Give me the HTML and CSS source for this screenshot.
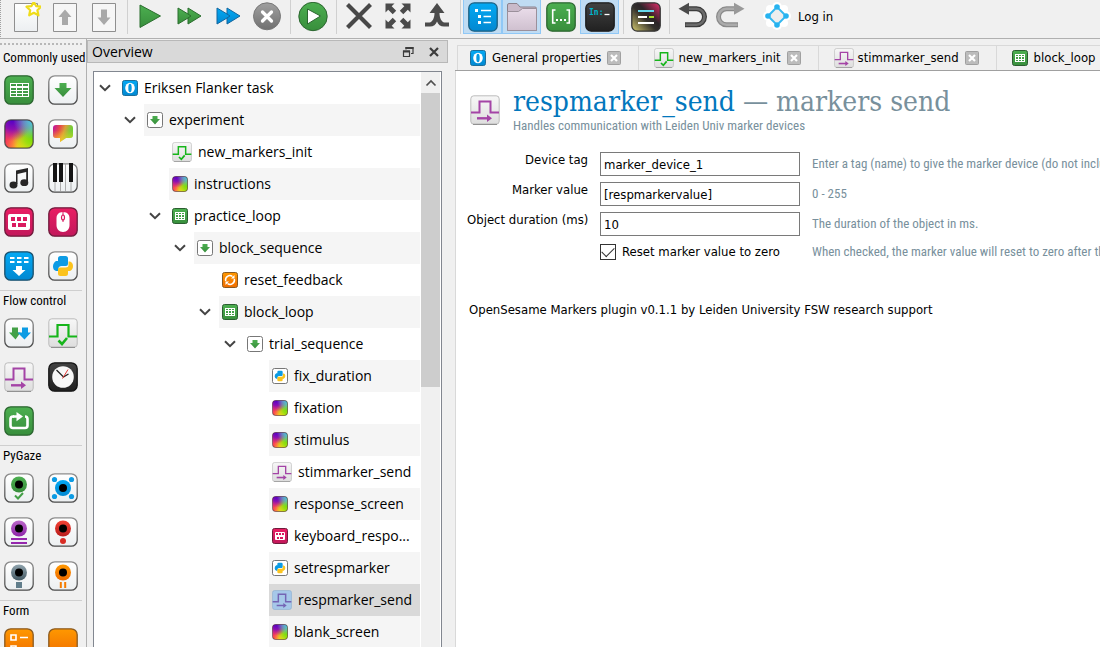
FILE: index.html
```html
<!DOCTYPE html>
<html lang="en">
<head>
<meta charset="utf-8">
<title>OpenSesame</title>
<link rel="stylesheet" href="styles.css">
</head>
<body>
<svg class="defs" aria-hidden="true">
  <defs>
    <linearGradient id="g-green" x1="0" y1="0" x2="0" y2="1"><stop offset="0" stop-color="#4caf50"/><stop offset="1" stop-color="#388e3c"/></linearGradient>
    <linearGradient id="g-blue" x1="0" y1="0" x2="0" y2="1"><stop offset="0" stop-color="#03a9f4"/><stop offset="1" stop-color="#0288d1"/></linearGradient>
    <linearGradient id="g-pink" x1="0" y1="0" x2="0" y2="1"><stop offset="0" stop-color="#e91e63"/><stop offset="1" stop-color="#c2185b"/></linearGradient>
    <linearGradient id="g-orange" x1="0" y1="0" x2="0" y2="1"><stop offset="0" stop-color="#ff9800"/><stop offset="1" stop-color="#ef6c00"/></linearGradient>
    <linearGradient id="g-white" x1="0" y1="0" x2="0" y2="1"><stop offset="0" stop-color="#fff"/><stop offset="1" stop-color="#eceff1"/></linearGradient>
    <linearGradient id="g-silver" x1="0" y1="0" x2="0" y2="1"><stop offset="0" stop-color="#f7f7f7"/><stop offset="1" stop-color="#dedede"/></linearGradient>
    <linearGradient id="g-dark" x1="0" y1="0" x2="0" y2="1"><stop offset="0" stop-color="#424242"/><stop offset="1" stop-color="#212121"/></linearGradient>
    <linearGradient id="g-gray" x1="0" y1="0" x2="0" y2="1"><stop offset="0" stop-color="#a0a0a0"/><stop offset="1" stop-color="#707070"/></linearGradient>
    <linearGradient id="g-purple" x1="0" y1="0" x2="0" y2="1"><stop offset="0" stop-color="#ba68c8"/><stop offset="1" stop-color="#8e24aa"/></linearGradient>
    <linearGradient id="g-red" x1="0" y1="0" x2="0" y2="1"><stop offset="0" stop-color="#f44336"/><stop offset="1" stop-color="#b71c1c"/></linearGradient>
    <linearGradient id="g-slate" x1="0" y1="0" x2="0" y2="1"><stop offset="0" stop-color="#90a4ae"/><stop offset="1" stop-color="#455a64"/></linearGradient>
    <linearGradient id="g-folder" x1="0" y1="0" x2="0" y2="1"><stop offset="0" stop-color="#e9dce9"/><stop offset="1" stop-color="#cfc0cf"/></linearGradient>
    <linearGradient id="g-edge" x1="0" y1="0" x2="0" y2="1"><stop offset="0" stop-color="#8c8c8c"/><stop offset="1" stop-color="#4a4a4a"/></linearGradient>
    <linearGradient id="g-mono" x1="0" y1="1" x2="1" y2="0"><stop offset="0" stop-color="#d8cd70"/><stop offset=".45" stop-color="#33302c"/><stop offset=".6" stop-color="#2c2528"/><stop offset="1" stop-color="#ec2a6c"/></linearGradient>
    <linearGradient id="g-bubble" x1="0" y1=".2" x2="1" y2=".5"><stop offset="0" stop-color="#c01898"/><stop offset=".3" stop-color="#e84848"/><stop offset=".55" stop-color="#d8a038"/><stop offset=".8" stop-color="#80c838"/><stop offset="1" stop-color="#68d030"/></linearGradient>
    <linearGradient id="g-warm" x1="0" y1="0" x2="0" y2="1"><stop offset=".3" stop-color="#ffd820" stop-opacity="0"/><stop offset="1" stop-color="#ffd820" stop-opacity=".7"/></linearGradient>
    <radialGradient id="r-purple" cx=".25" cy="0" r=".75"><stop offset="0" stop-color="#5000c8"/><stop offset=".45" stop-color="#7808c0" stop-opacity=".85"/><stop offset="1" stop-color="#b010b0" stop-opacity="0"/></radialGradient>
    <radialGradient id="r-cyan" cx="1" cy="0" r=".7"><stop offset="0" stop-color="#38d0f0"/><stop offset=".5" stop-color="#48b8e0" stop-opacity=".65"/><stop offset="1" stop-color="#50c0c0" stop-opacity="0"/></radialGradient>
    <radialGradient id="r-green" cx="1" cy=".6" r=".75"><stop offset="0" stop-color="#70e000"/><stop offset=".4" stop-color="#90e010" stop-opacity=".9"/><stop offset="1" stop-color="#b0e010" stop-opacity="0"/></radialGradient>
    <radialGradient id="r-yellow" cx=".7" cy="1" r=".7"><stop offset="0" stop-color="#ffe818"/><stop offset=".4" stop-color="#ffe018" stop-opacity=".8"/><stop offset="1" stop-color="#ffb020" stop-opacity="0"/></radialGradient>

    <symbol id="i-frame-white" viewBox="0 0 30 30"><rect x=".8" y=".8" width="28.4" height="28.4" rx="6" fill="url(#g-white)" stroke="url(#g-edge)" stroke-width="1.3"/></symbol>
    <symbol id="i-frame-silver" viewBox="0 0 30 30"><rect x=".8" y=".8" width="28.4" height="28.4" rx="3" fill="url(#g-silver)" stroke="#bcbcbc"/><path d="M3 29.4h24" stroke="#8a8a8a"/></symbol>
    <symbol id="i-table" viewBox="0 0 30 30"><rect x=".8" y=".8" width="28.4" height="28.4" rx="6" fill="url(#g-green)" stroke="#2c6630" stroke-width="1.3"/><path d="M6 8h19v14H6z" fill="#fff"/><path d="M7 9h5v2H7zM13 9h5v2h-5zM19 9h5v2h-5zM7 13h5v2H7zM13 13h5v2h-5zM19 13h5v2h-5zM7 16h5v2H7zM13 16h5v2h-5zM19 16h5v2h-5zM7 19h5v2H7zM13 19h5v2h-5zM19 19h5v2h-5z" fill="#409a45"/></symbol>
    <symbol id="i-loop" viewBox="0 0 16 16"><rect x=".5" y=".5" width="15" height="15" rx="2" fill="url(#g-green)" stroke="#2b5e30"/><path d="M3 4h10v8H3z" fill="#fff"/><path d="M4 5h2v1H4zM7 5h2v1H7zM10 5h2v1h-2zM4 7h2v2H4zM7 7h2v2H7zM10 7h2v2h-2zM4 10h2v1H4zM7 10h2v1H7zM10 10h2v1h-2z" fill="#43a047"/></symbol>
    <symbol id="i-seq" viewBox="0 0 30 30"><use href="#i-frame-white"/><path d="M11.5 8h7v5h5L15 22 6.500 13h5z" fill="url(#g-green)"/></symbol>
    <symbol id="i-seq-s" viewBox="0 0 16 16"><rect x=".5" y=".5" width="15" height="15" rx="2" fill="#fff" stroke="#777"/><path d="M5.500 4h5v3H13l-5 5.500L3 7h2.500z" fill="url(#g-green)"/></symbol>
    <symbol id="i-color" viewBox="0 0 30 30"><g><rect x="1" y="1" width="28" height="28" rx="6" fill="#f83c58"/><rect x="1" y="1" width="28" height="28" rx="6" fill="url(#r-yellow)"/><rect x="1" y="1" width="28" height="28" rx="6" fill="url(#r-green)"/><rect x="1" y="1" width="28" height="28" rx="6" fill="url(#r-purple)"/><rect x="1" y="1" width="28" height="28" rx="6" fill="url(#r-cyan)"/></g><rect x=".8" y=".8" width="28.4" height="28.4" rx="6" fill="none" stroke="#333" stroke-opacity=".8" stroke-width="1.3"/></symbol>
    <symbol id="i-bubble" viewBox="0 0 30 30"><use href="#i-frame-white"/><path d="M8 6h14q3 0 3 3v7q0 3-3 3h-4l-6 4v-4H8q-3 0-3-3V9q0-3 3-3z" fill="url(#g-bubble)"/><path d="M8 6h14q3 0 3 3v7q0 3-3 3h-4l-6 4v-4H8q-3 0-3-3V9q0-3 3-3z" fill="url(#g-warm)"/></symbol>
    <symbol id="i-music" viewBox="0 0 30 30"><use href="#i-frame-white"/><path d="M12 7.500L24 5v14h-1.800V9L13.500 11v10H12z" fill="#262626"/><ellipse cx="9.500" cy="22" rx="4" ry="3.400" fill="#262626"/><ellipse cx="20.300" cy="19.700" rx="4" ry="3.400" fill="#262626"/></symbol>
    <symbol id="i-piano" viewBox="0 0 30 30"><use href="#i-frame-white"/><path d="M7 1v27.500M12.500 1v27.500M17.500 1v27.500M23 1v27.500" stroke="#9a9a9a" stroke-width=".8"/><path d="M5 0h4v19H5zM11 0h4v19h-4zM21 0h4v19h-4z" fill="#151515"/></symbol>
    <symbol id="i-keys" viewBox="0 0 30 30"><rect x=".8" y=".8" width="28.4" height="28.4" rx="6" fill="url(#g-pink)" stroke="#6f1c3c" stroke-width="1.300"/><rect x="4" y="7" width="22" height="16" rx="2" fill="#fff"/><path d="M7 10h4v4H7zM13 10h4v4h-4zM19 10h4v4h-4zM8 16h4v4H8zM14 16h8v4h-8z" fill="#da1b60"/></symbol>
    <symbol id="i-keys-s" viewBox="0 0 16 16"><rect x=".5" y=".5" width="15" height="15" rx="2" fill="url(#g-pink)" stroke="#6f1c3c"/><rect x="3" y="4" width="10" height="8" rx="1" fill="#fff"/><path d="M4 5h2v2H4zM7 5h2v2H7zM10 5h2v2h-2zM5 9h2v2H5zM8 9h3v2H8z" fill="#da1b60"/></symbol>
    <symbol id="i-mouse" viewBox="0 0 30 30"><rect x=".8" y=".8" width="28.4" height="28.4" rx="6" fill="url(#g-pink)" stroke="#6f1c3c" stroke-width="1.300"/><path d="M15 5c4.500 0 6.500 3 6.500 6v7c0 4-2.500 7-6.500 7s-6.500-3-6.500-7v-7c0-3 2-6 6.500-6z" fill="#fff"/><path d="M15 5v3.500M15 12v3" stroke="#d81b60"/><ellipse cx="15" cy="10.500" rx="1.500" ry="2.500" fill="none" stroke="#d81b60" stroke-width="1.200"/></symbol>
    <symbol id="i-batch" viewBox="0 0 30 30"><rect x=".8" y=".8" width="28.400" height="28.400" rx="6" fill="url(#g-blue)" stroke="#1b506c" stroke-width="1.300"/><path d="M6 7h4.500M13 7h4.500M20 7h4.500M6 11h4.500M13 11h4.500M20 11h4.500" stroke="#fff" stroke-width="1.800"/><path d="M12 15h6v4h3.500L15 25l-6.500-6H12z" fill="#fff"/></symbol>
    <symbol id="i-py-mark" viewBox="0 0 30 30"><path d="M12.500 5h5q2.500 0 2.500 2.500V13q0 2-2 2h-4.500q-3 0-3 2.500V20H8q-3-1-3-4.500T8 10h2V7.500Q10 5 12.500 5z" fill="#0c9be4"/><path d="M12.500 25h5q2.500 0 2.500-2.500V20h2q3-1.500 3-5t-3-4.500h-1.500V14q0 2.500-3 2.500H12q-2 0-2 2v4Q10 25 12.500 25z" fill="#fbc31d"/></symbol>
    <symbol id="i-python" viewBox="0 0 30 30"><use href="#i-frame-white"/><use href="#i-py-mark"/></symbol>
    <symbol id="i-python-s" viewBox="0 0 16 16"><rect x=".5" y=".5" width="15" height="15" rx="2" fill="#fff" stroke="#777"/><use href="#i-py-mark" width="16" height="16"/></symbol>
    <symbol id="i-parallel" viewBox="0 0 30 30"><use href="#i-frame-white"/><path d="M8 9.500h6v5h2.500l-5 7-6.500-7h3z" fill="#43a047"/><path d="M18 9.500h6v5h3l-6.500 7-7-7H18z" fill="#0c9be4"/></symbol>
    <symbol id="i-pulse-ok" viewBox="0 0 30 30"><use href="#i-frame-silver"/><path d="M1 18.500h8.500V7h11v11.500H29" fill="none" stroke="#16b51a" stroke-width="2.200"/><path d="M10.500 22.500l3.500 3.500 5-6" fill="none" stroke="#16b51a" stroke-width="2.600"/></symbol>
    <symbol id="i-pulse" viewBox="0 0 30 30"><use href="#i-frame-silver"/><path d="M1 17.500h8.500V6.500h11v11H29" fill="none" stroke="#a444a6" stroke-width="2"/><path d="M7 23.300h12" stroke="#a444a6" stroke-width="2.400"/><path d="M17 19.500l5 3.800-5 3.800z" fill="#a444a6"/></symbol>
    <symbol id="i-pulse-sel" viewBox="0 0 30 30"><rect x=".8" y=".8" width="28.400" height="28.400" rx="3" fill="#a6c8e9" stroke="#8fb0d0"/><path d="M1 17.500h8.500V6.500h11v11H29M7 23.300h12" fill="none" stroke="#7464b4" stroke-width="2.200"/><path d="M17 19.500l5 3.800-5 3.800z" fill="#7464b4"/></symbol>
    <symbol id="i-clock" viewBox="0 0 30 30"><rect x=".8" y=".8" width="28.400" height="28.400" rx="6" fill="url(#g-dark)" stroke="#151515" stroke-width="1.300"/><circle cx="15" cy="15" r="10.800" fill="#f8f8f8"/><path d="M8.500 8l7 7 5-3" fill="none" stroke="#222" stroke-width="1.300"/><path d="M14.500 16.500L20 7.500" stroke="#e53935"/></symbol>
    <symbol id="i-repeat" viewBox="0 0 30 30"><rect x=".8" y=".8" width="28.400" height="28.400" rx="6" fill="url(#g-green)" stroke="#2c6630" stroke-width="1.300"/><path d="M10 10.500H9q-2.500 0-2.500 2.500v6.500Q6.500 22 9 22h12q2.500 0 2.500-2.500V13q0-2.500-2.500-2.500" fill="none" stroke="#fff" stroke-width="2.600"/><path d="M9 9.200h3.500V6l6.500 4.600-6.500 4.700v-3.500H9z" fill="#fff"/></symbol>
    <symbol id="i-eye-green" viewBox="0 0 30 30"><use href="#i-frame-white"/><circle cx="15" cy="11.500" r="8" fill="url(#g-green)"/><circle cx="15" cy="11.500" r="4" fill="#000"/><path d="M11 22.500l3 3 5-5.500" fill="none" stroke="#43a047" stroke-width="2"/></symbol>
    <symbol id="i-eye-blue" viewBox="0 0 30 30"><use href="#i-frame-white"/><g fill="#0c9be4"><circle cx="6.500" cy="6.500" r="2.600"/><circle cx="23.500" cy="6.500" r="2.600"/><circle cx="6.500" cy="23.500" r="2.600"/><circle cx="23.500" cy="23.500" r="2.600"/></g><circle cx="15" cy="15" r="8" fill="url(#g-blue)"/><circle cx="15" cy="15" r="4" fill="#000"/></symbol>
    <symbol id="i-eye-purple" viewBox="0 0 30 30"><use href="#i-frame-white"/><circle cx="15" cy="11.500" r="8" fill="url(#g-purple)"/><circle cx="15" cy="11.500" r="4" fill="#000"/><path d="M7 22h16M7 26h16" stroke="#9527ad" stroke-width="2"/></symbol>
    <symbol id="i-eye-red" viewBox="0 0 30 30"><use href="#i-frame-white"/><circle cx="15" cy="11.500" r="8" fill="url(#g-red)"/><circle cx="15" cy="11.500" r="4" fill="#000"/><circle cx="15" cy="24" r="3" fill="#d92d25"/></symbol>
    <symbol id="i-eye-slate" viewBox="0 0 30 30"><use href="#i-frame-white"/><circle cx="15" cy="11.500" r="8" fill="url(#g-slate)"/><circle cx="15" cy="11.500" r="4" fill="#000"/><path d="M12 21h6v6h-6z" fill="#607d8b"/></symbol>
    <symbol id="i-eye-orange" viewBox="0 0 30 30"><use href="#i-frame-white"/><circle cx="15" cy="11.500" r="8" fill="url(#g-orange)"/><circle cx="15" cy="11.500" r="4" fill="#000"/><path d="M12.800 21v6M17.200 21v6" stroke="#f57c00" stroke-width="2"/></symbol>
    <symbol id="i-form" viewBox="0 0 30 30"><rect x=".8" y=".8" width="28.400" height="28.400" rx="6" fill="url(#g-orange)" stroke="#8a5a20" stroke-width="1.300"/><path d="M7 7h5v5H7zM7 18h5v5H7z" fill="none" stroke="#fff" stroke-width="1.600"/><path d="M16 9.500h8M16 20.500h8" stroke="#fff" stroke-width="1.300"/></symbol>
    <symbol id="i-form-blank" viewBox="0 0 30 30"><rect x=".8" y=".8" width="28.400" height="28.400" rx="6" fill="url(#g-orange)" stroke="#8a5a20" stroke-width="1.300"/></symbol>
    <symbol id="i-reset" viewBox="0 0 16 16"><rect x=".5" y=".5" width="15" height="15" rx="2" fill="url(#g-orange)" stroke="#8a5a20"/><path d="M3.700 9A4.300 4.300 0 0 1 10.500 4.500M12.300 7a4.300 4.300 0 0 1-6.800 4.500" fill="none" stroke="#fff" stroke-width="1.500"/><path d="M9 6.500h3.500V3zM7 9.500H3.500V13z" fill="#fff"/></symbol>
    <symbol id="i-os" viewBox="0 0 16 16"><rect x=".5" y=".5" width="15" height="15" rx="2" fill="url(#g-blue)" stroke="#1d6f9b"/><ellipse cx="8" cy="8" rx="4.800" ry="5.300" fill="#fff"/><ellipse cx="8" cy="8" rx="1.700" ry="4.300" fill="#0598e0"/></symbol>

    <symbol id="t-new" viewBox="0 0 30 30"><path d="M3.500 1.500h23v28h-23z" fill="url(#g-white)" stroke="#8f8f8f"/><path d="M22.800-.2l2.300 4.300 5 .6-3.700 3.500 1 5.100-4.600-2.500-4.600 2.500 1-5.100-3.700-3.500 5-.6z" fill="#fff" stroke="#efdc1a" stroke-width="2.200" stroke-linejoin="round"/></symbol>
    <symbol id="t-up" viewBox="0 0 30 30"><path d="M3.500 1.500h23v28h-23z" fill="#f6f6f6" stroke="#8f8f8f"/><path d="M12 23v-8H8.500L15 7.500l6.500 7.500H18v8z" fill="#a9a9a9"/></symbol>
    <symbol id="t-down" viewBox="0 0 30 30"><path d="M3.500 1.500h23v28h-23z" fill="#f6f6f6" stroke="#8f8f8f"/><path d="M12 7.500v8H8.500L15 23l6.500-7.500H18v-8z" fill="#a9a9a9"/></symbol>
    <symbol id="t-play" viewBox="0 0 30 30"><path d="M5 3l20.500 11L5 25.500z" fill="url(#g-green)" stroke="#2b6e2e"/></symbol>
    <symbol id="t-ff" viewBox="0 0 30 30"><path d="M4 6l10 6V6l13 8-13 8v-6L4 22z" fill="url(#g-green)" stroke="#2b6e2e"/><path d="M14 12l3 2-3 2" fill="none" stroke="#2b6e2e"/></symbol>
    <symbol id="t-ffb" viewBox="0 0 30 30"><path d="M4 6l10 6V6l13 8-13 8v-6L4 22z" fill="url(#g-blue)" stroke="#1266a0"/><path d="M14 12l3 2-3 2" fill="none" stroke="#1266a0"/></symbol>
    <symbol id="t-kill" viewBox="0 0 30 30"><circle cx="15" cy="14.300" r="13.500" fill="url(#g-gray)" stroke="#777"/><path d="M10.500 10l9 9M19.500 10l-9 9" stroke="#fff" stroke-width="3.300" stroke-linecap="round"/></symbol>
    <symbol id="t-run" viewBox="0 0 30 30"><circle cx="15" cy="14.500" r="14.200" fill="url(#g-green)" stroke="#2c6630"/><path d="M9.500 7l13 7-13 8z" fill="#fff" stroke="#2c6630"/></symbol>
    <symbol id="t-x" viewBox="0 0 30 30"><path d="M3.500 2.500l23 23M26.500 2.500l-23 23" stroke="#484848" stroke-width="4.200"/></symbol>
    <symbol id="t-expand" viewBox="0 0 30 30"><path d="M2.500 1.500h9L8.700 4.200l4.500 4.500-3.500 3.500-4.500-4.500-2.700 2.800zM27.500 1.500h-9l2.800 2.700-4.500 4.500 3.500 3.500 4.500-4.500 2.700 2.800zM2.500 26.500h9l-2.800-2.700 4.500-4.500-3.500-3.500-4.500 4.500-2.700-2.800zM27.500 26.500h-9l2.800-2.700-4.500-4.500 3.500-3.500 4.500 4.500 2.700-2.800z" fill="#4b4b4b"/></symbol>
    <symbol id="t-merge" viewBox="0 0 30 30"><path d="M15 1l7.500 10h-5c0 5 2 9 5 9.500H27v4h-5c-3.500 0-6-2-7-5-1 3-3.500 5-7 5H3v-4h4.500c3-.5 5-4.500 5-9.500h-5z" fill="#4b4b4b"/></symbol>
    <symbol id="t-list" viewBox="0 0 30 30"><rect x=".8" y=".8" width="28.400" height="28.400" rx="5.500" fill="url(#g-blue)" stroke="#1d5f80" stroke-width="1.300"/><path d="M7 7h3v3H7zM10 13h3v3h-3zM10 19h3v3h-3z" fill="#fff"/><path d="M13 8.500h10M15.500 14.500H23M15.500 20.500H23" stroke="#fff" stroke-width="1.600"/></symbol>
    <symbol id="t-folder" viewBox="0 0 30 30"><path d="M.5 28.500V3q0-1.500 1.500-1.500h8L13 5h15q1.500 0 1.500 1.500v22z" fill="#c9bac9" stroke="#8c828c"/><path d="M.5 28.500v-19h11l4-3h14v22z" fill="url(#g-folder)" stroke="#9b909b"/></symbol>
    <symbol id="t-dots" viewBox="0 0 30 30"><rect x=".8" y=".8" width="28.400" height="28.400" rx="5.500" fill="url(#g-green)" stroke="#2c6630" stroke-width="1.300"/><path d="M9.500 8H6.700v13h2.800M20.500 8h2.800v13h-2.800" fill="none" stroke="#fff" stroke-width="1.600"/><path d="M10 17h2v2h-2zM14 17h2v2h-2zM18 17h2v2h-2z" fill="#fff"/></symbol>
    <symbol id="t-console" viewBox="0 0 30 30"><rect x=".8" y=".8" width="28.400" height="28.400" rx="5.500" fill="url(#g-dark)" stroke="#1c1c1c" stroke-width="1.300"/><text class="console-text" x="4" y="13" fill="#00b4cc">In:</text><path d="M19.500 12.500h5" stroke="#fff" stroke-width="1.300"/></symbol>
    <symbol id="t-theme" viewBox="0 0 30 30"><rect x=".8" y=".8" width="28.400" height="28.400" rx="5.500" fill="url(#g-mono)" stroke="#333" stroke-width="1.300"/><path d="M7 9h16" stroke="#66d9ef" stroke-width="2"/><path d="M7 15h9" stroke="#fff" stroke-width="2"/><path d="M18 15h5" stroke="#a6e22e" stroke-width="2"/><path d="M7 21h16" stroke="#fff" stroke-width="2"/></symbol>
    <symbol id="t-undo" viewBox="0 0 30 30"><path d="M11 6.800h8.500a7.700 7.700 0 0 1 0 16H8" fill="none" stroke="#3c3c3c" stroke-width="5"/><path d="M11 6.800h8.500a7.700 7.700 0 0 1 0 16H8.500" fill="none" stroke="#6b6b6b" stroke-width="2.600"/><path d="M12 .8v12L1.500 6.800z" fill="#4a4a4a"/></symbol>
    <symbol id="t-redo" viewBox="0 0 30 30"><path d="M19 6.800h-8.500a7.700 7.700 0 0 0 0 16H22" fill="none" stroke="#8a8a8a" stroke-width="5"/><path d="M19 6.800h-8.500a7.700 7.700 0 0 0 0 16h11" fill="none" stroke="#ababab" stroke-width="2.600"/><path d="M18 .8v12l10.500-6z" fill="#999"/></symbol>
    <symbol id="t-osf" viewBox="0 0 30 30"><g fill="#fff"><circle cx="15" cy="5" r="5"/><circle cx="24" cy="14" r="5"/><circle cx="6" cy="14" r="5"/><circle cx="15" cy="23" r="5"/><circle cx="8" cy="7" r="4"/><circle cx="22" cy="7" r="4"/><circle cx="8" cy="21" r="4"/><circle cx="22" cy="21" r="4"/></g><path d="M15 5l9 9-9 9-9-9z" fill="#eee" stroke="#35b8f0" stroke-width="2" stroke-dasharray="8 4.700" stroke-dashoffset="-2.300"/><g fill="#27b3f0"><circle cx="15" cy="5" r="2.800"/><circle cx="24" cy="14" r="2.800"/><circle cx="15" cy="23" r="2.800"/><circle cx="6" cy="14" r="2.800"/></g></symbol>

    <symbol id="c-down" viewBox="0 0 12 8"><path d="M1 1.200l5 5 5-5" fill="none" stroke="#444" stroke-width="2"/></symbol>
    <symbol id="c-up" viewBox="0 0 12 8"><path d="M1.500 6.500L6 2l4.500 4.500" fill="none" stroke="#505050" stroke-width="1.700"/></symbol>
    <symbol id="c-close" viewBox="0 0 14 14"><rect x=".5" y=".5" width="13" height="13" rx="1" fill="#bcbcbc" stroke="#a0a0a0"/><path d="M4 4l6 6M10 4l-6 6" stroke="#fff" stroke-width="2.200"/></symbol>
    <symbol id="c-x" viewBox="0 0 12 12"><path d="M2 2l8 8M10 2l-8 8" stroke="#3c3c3c" stroke-width="2.200"/></symbol>
    <symbol id="c-float" viewBox="0 0 12 12"><path d="M4 3.500V1.500h7v6H9M1.500 5h6v5.500h-6z" fill="none" stroke="#3c3c3c" stroke-width="1.200"/><path d="M3.500 2h8M1 5.500h7" stroke="#3c3c3c" stroke-width="2"/></symbol>
  </defs>
</svg>

<div class="app">
  <header class="toolbar">
    <button class="tool" aria-label="New"><svg class="icon-l"><use href="#t-new"/></svg></button>
    <button class="tool" aria-label="Open"><svg class="icon-l"><use href="#t-up"/></svg></button>
    <button class="tool" aria-label="Save"><svg class="icon-l"><use href="#t-down"/></svg></button>
    <span class="divider"></span>
    <button class="tool" aria-label="Run fullscreen"><svg class="icon-l"><use href="#t-play"/></svg></button>
    <button class="tool" aria-label="Run in window"><svg class="icon-l"><use href="#t-ff"/></svg></button>
    <button class="tool" aria-label="Quick run"><svg class="icon-l"><use href="#t-ffb"/></svg></button>
    <button class="tool" aria-label="Kill experiment"><svg class="icon-l"><use href="#t-kill"/></svg></button>
    <span class="divider"></span>
    <button class="tool" aria-label="Test"><svg class="icon-l"><use href="#t-run"/></svg></button>
    <span class="divider"></span>
    <button class="tool" aria-label="Close all tabs"><svg class="icon-l"><use href="#t-x"/></svg></button>
    <button class="tool" aria-label="Close other tabs"><svg class="icon-l"><use href="#t-expand"/></svg></button>
    <button class="tool" aria-label="One tab"><svg class="icon-l"><use href="#t-merge"/></svg></button>
    <span class="divider"></span>
    <button class="tool active" aria-label="Overview"><svg class="icon-l"><use href="#t-list"/></svg></button>
    <button class="tool active" aria-label="File pool"><svg class="icon-l"><use href="#t-folder"/></svg></button>
    <button class="tool" aria-label="Variables"><svg class="icon-l"><use href="#t-dots"/></svg></button>
    <button class="tool active" aria-label="Console"><svg class="icon-l"><use href="#t-console"/></svg></button>
    <span class="divider"></span>
    <button class="tool" aria-label="Theme"><svg class="icon-l"><use href="#t-theme"/></svg></button>
    <span class="divider"></span>
    <button class="tool" aria-label="Undo"><svg class="icon-l"><use href="#t-undo"/></svg></button>
    <button class="tool" aria-label="Redo"><svg class="icon-l"><use href="#t-redo"/></svg></button>
    <button class="login"><svg class="icon-l"><use href="#t-osf"/></svg>Log in</button>
  </header>

  <div class="workspace">
    <aside class="palette">
      <section class="group">
        <h2>Commonly used</h2>
        <div class="items">
          <button aria-label="loop"><svg class="icon-l"><use href="#i-table"/></svg></button>
          <button aria-label="sequence"><svg class="icon-l"><use href="#i-seq"/></svg></button>
          <button aria-label="sketchpad"><svg class="icon-l"><use href="#i-color"/></svg></button>
          <button aria-label="feedback"><svg class="icon-l"><use href="#i-bubble"/></svg></button>
          <button aria-label="sampler"><svg class="icon-l"><use href="#i-music"/></svg></button>
          <button aria-label="synth"><svg class="icon-l"><use href="#i-piano"/></svg></button>
          <button aria-label="keyboard response"><svg class="icon-l"><use href="#i-keys"/></svg></button>
          <button aria-label="mouse response"><svg class="icon-l"><use href="#i-mouse"/></svg></button>
          <button aria-label="logger"><svg class="icon-l"><use href="#i-batch"/></svg></button>
          <button aria-label="inline script"><svg class="icon-l"><use href="#i-python"/></svg></button>
        </div>
      </section>
      <section class="group">
        <h2>Flow control</h2>
        <div class="items">
          <button aria-label="coroutines"><svg class="icon-l"><use href="#i-parallel"/></svg></button>
          <button aria-label="markers init"><svg class="icon-l"><use href="#i-pulse-ok"/></svg></button>
          <button aria-label="markers send"><svg class="icon-l"><use href="#i-pulse"/></svg></button>
          <button aria-label="advanced delay"><svg class="icon-l"><use href="#i-clock"/></svg></button>
          <button aria-label="repeat cycle"><svg class="icon-l"><use href="#i-repeat"/></svg></button>
        </div>
      </section>
      <section class="group">
        <h2>PyGaze</h2>
        <div class="items">
          <button aria-label="pygaze drift correct"><svg class="icon-l"><use href="#i-eye-green"/></svg></button>
          <button aria-label="pygaze init"><svg class="icon-l"><use href="#i-eye-blue"/></svg></button>
          <button aria-label="pygaze log"><svg class="icon-l"><use href="#i-eye-purple"/></svg></button>
          <button aria-label="pygaze start recording"><svg class="icon-l"><use href="#i-eye-red"/></svg></button>
          <button aria-label="pygaze stop recording"><svg class="icon-l"><use href="#i-eye-slate"/></svg></button>
          <button aria-label="pygaze wait"><svg class="icon-l"><use href="#i-eye-orange"/></svg></button>
        </div>
      </section>
      <section class="group">
        <h2>Form</h2>
        <div class="items">
          <button aria-label="form multiple choice"><svg class="icon-l"><use href="#i-form"/></svg></button>
          <button aria-label="form base"><svg class="icon-l"><use href="#i-form-blank"/></svg></button>
        </div>
      </section>
    </aside>

    <section class="dock">
      <header class="dock-title">
        <h2>Overview</h2>
        <button aria-label="Float"><svg class="icon-xs"><use href="#c-float"/></svg></button>
        <button aria-label="Close"><svg class="icon-xs"><use href="#c-x"/></svg></button>
      </header>
      <div class="tree-box">
        <ul class="tree">
          <li class="d0"><button class="twist" aria-label="Collapse"><svg><use href="#c-down"/></svg></button><span class="node"><svg class="icon-s"><use href="#i-os"/></svg>Eriksen Flanker task</span></li>
          <li class="d1"><button class="twist" aria-label="Collapse"><svg><use href="#c-down"/></svg></button><span class="node"><svg class="icon-s"><use href="#i-seq-s"/></svg>experiment</span></li>
          <li class="d2"><span class="twist"></span><span class="node"><svg class="icon-m"><use href="#i-pulse-ok"/></svg>new_markers_init</span></li>
          <li class="d2"><span class="twist"></span><span class="node"><svg class="icon-s"><use href="#i-color"/></svg>instructions</span></li>
          <li class="d2"><button class="twist" aria-label="Collapse"><svg><use href="#c-down"/></svg></button><span class="node"><svg class="icon-s"><use href="#i-loop"/></svg>practice_loop</span></li>
          <li class="d3"><button class="twist" aria-label="Collapse"><svg><use href="#c-down"/></svg></button><span class="node"><svg class="icon-s"><use href="#i-seq-s"/></svg>block_sequence</span></li>
          <li class="d4"><span class="twist"></span><span class="node"><svg class="icon-s"><use href="#i-reset"/></svg>reset_feedback</span></li>
          <li class="d4"><button class="twist" aria-label="Collapse"><svg><use href="#c-down"/></svg></button><span class="node"><svg class="icon-s"><use href="#i-loop"/></svg>block_loop</span></li>
          <li class="d5"><button class="twist" aria-label="Collapse"><svg><use href="#c-down"/></svg></button><span class="node"><svg class="icon-s"><use href="#i-seq-s"/></svg>trial_sequence</span></li>
          <li class="d6"><span class="twist"></span><span class="node"><svg class="icon-s"><use href="#i-python-s"/></svg>fix_duration</span></li>
          <li class="d6"><span class="twist"></span><span class="node"><svg class="icon-s"><use href="#i-color"/></svg>fixation</span></li>
          <li class="d6"><span class="twist"></span><span class="node"><svg class="icon-s"><use href="#i-color"/></svg>stimulus</span></li>
          <li class="d6"><span class="twist"></span><span class="node"><svg class="icon-m"><use href="#i-pulse"/></svg>stimmarker_send</span></li>
          <li class="d6"><span class="twist"></span><span class="node"><svg class="icon-s"><use href="#i-color"/></svg>response_screen</span></li>
          <li class="d6"><span class="twist"></span><span class="node"><svg class="icon-s"><use href="#i-keys-s"/></svg>keyboard_respo...</span></li>
          <li class="d6"><span class="twist"></span><span class="node"><svg class="icon-s"><use href="#i-python-s"/></svg>setrespmarker</span></li>
          <li class="d6 selected"><span class="twist"></span><span class="node"><svg class="icon-m"><use href="#i-pulse-sel"/></svg>respmarker_send</span></li>
          <li class="d6"><span class="twist"></span><span class="node"><svg class="icon-s"><use href="#i-color"/></svg>blank_screen</span></li>
        </ul>
        <div class="scrollbar"><button aria-label="Scroll up"><svg><use href="#c-up"/></svg></button><div class="thumb"></div></div>
      </div>
    </section>

    <main class="editor">
      <nav class="tabs">
        <div class="tab"><svg class="icon-s"><use href="#i-os"/></svg><a href="#general">General properties</a><button aria-label="Close tab"><svg><use href="#c-close"/></svg></button></div>
        <div class="tab"><svg class="icon-m"><use href="#i-pulse-ok"/></svg><a href="#init">new_markers_init</a><button aria-label="Close tab"><svg><use href="#c-close"/></svg></button></div>
        <div class="tab"><svg class="icon-m"><use href="#i-pulse"/></svg><a href="#send">stimmarker_send</a><button aria-label="Close tab"><svg><use href="#c-close"/></svg></button></div>
        <div class="tab"><svg class="icon-s"><use href="#i-loop"/></svg><a href="#loop">block_loop</a></div>
      </nav>
      <div class="page">
        <header class="item-head">
          <svg class="icon-l"><use href="#i-pulse"/></svg>
          <div>
            <h1>respmarker_send <span>— markers send</span></h1>
            <p>Handles communication with Leiden Univ marker devices</p>
          </div>
        </header>
        <form class="form">
          <label class="name" for="tag">Device tag</label>
          <input id="tag" type="text" value="marker_device_1">
          <p class="hint">Enter a tag (name) to give the marker device (do not include</p>
          <label class="name" for="val">Marker value</label>
          <input id="val" type="text" value="[respmarkervalue]">
          <p class="hint">0 - 255</p>
          <label class="name" for="dur">Object duration (ms)</label>
          <input id="dur" type="text" value="10">
          <p class="hint">The duration of the object in ms.</p>
          <label class="check"><input type="checkbox" checked>Reset marker value to zero</label>
          <p class="hint">When checked, the marker value will reset to zero after the</p>
        </form>
        <p class="credits">OpenSesame Markers plugin v0.1.1 by Leiden University FSW research support</p>
      </div>
    </main>
  </div>
</div>
</body>
</html>
```
FILE: styles.css
```css
* { box-sizing: border-box; }

body {
  margin: 0;
  height: 100vh;
  overflow: hidden;
  background: #f0f0f0;
  color: #000;
  font: 13px/16px "DejaVu Sans Condensed", "Noto Sans", sans-serif;
}

h1, h2, p, ul { margin: 0; padding: 0; font-weight: normal; }

button {
  margin: 0;
  padding: 0;
  border: 0;
  background: none;
  color: inherit;
  font: inherit;
}

svg { display: block; flex: none; }
.defs { position: absolute; width: 0; height: 0; }
.icon-l { width: 30px; height: 30px; overflow: visible; }
.icon-m { width: 20px; height: 20px; }
.icon-s { width: 16px; height: 16px; }
.icon-xs { width: 12px; height: 12px; }
.console-text { font: bold 8px "DejaVu Sans Mono", monospace; }

.app { display: flex; flex-direction: column; height: 100%; }

/* Main toolbar */
.toolbar {
  display: flex;
  flex: none;
  padding: 0 0 4px 5px;
  border-left: 1px dotted #a0a0a0;
  border-bottom: 1px solid #b0b0b0;
}
.tool {
  display: grid;
  place-items: center;
  width: 39px;
  height: 34px;
  flex: none;
  border: 1px solid transparent;
  border-top: 0;
}
.tool.active { background: #c0dcf3; border-color: #90c8f6; }
.divider {
  width: 1px;
  height: 34px;
  margin: 0 2px 0 4px;
  background: #d0d0d0;
}
.login {
  display: flex;
  align-items: center;
  gap: 6px;
  height: 34px;
  padding-left: 12px;
  white-space: nowrap;
}

.workspace { display: flex; flex: 1; min-height: 0; }

/* Item palette */
.palette {
  flex: none;
  width: 87px;
  overflow: hidden;
  border-right: 1px solid #b0b0b0;
}
.palette::before {
  content: "";
  display: block;
  height: 2px;
  margin: 4px 3px 3px 0;
  background: repeating-linear-gradient(90deg, #b8b8b8 0 2px, #f0f0f0 2px 4px);
}
.group { margin-right: 4px; padding-bottom: 2px; }
.group + .group { border-top: 1px solid #cfcfcf; }
.group h2 {
  padding-left: 3px;
  font: 13px/20px "Roboto Condensed", Roboto, sans-serif;
  white-space: nowrap;
}
.items {
  display: grid;
  grid-template-columns: 30px 30px;
  gap: 14px;
  padding: 7px 4px;
}

/* Overview dock */
.dock {
  display: flex;
  flex-direction: column;
  flex: none;
  width: 361px;
  padding-top: 1px;
}
.dock-title {
  display: flex;
  align-items: center;
  gap: 14px;
  height: 23px;
  padding: 0 7px 0 4px;
  border: 1px solid #b8b8b8;
  background: #d9d9d9;
}
.dock-title h2 { flex: 1; font: 14px/20px "Open Sans", sans-serif; }
.tree-box {
  display: flex;
  flex: 1;
  min-height: 0;
  margin: 8px 6px 0;
  overflow: hidden;
  border: 1px solid #828790;
  border-bottom: 0;
  background: #fff;
}
.tree {
  flex: 1;
  list-style: none;
  font: 14px/32px "Open Sans", sans-serif;
  white-space: nowrap;
}
.tree li { display: flex; height: 32px; }
.twist {
  display: grid;
  place-items: center;
  width: 25px;
  padding-right: 3px;
  flex: none;
}
.twist svg { width: 12px; height: 8px; }
.node {
  display: flex;
  align-items: center;
  gap: 6px;
  flex: 1;
  padding-left: 3px;
}
.tree li:nth-child(even) .node { background: #f5f5f5; }
.tree li.selected .node { background: #d9d9d9; }
.d1 { padding-left: 25px; }
.d2 { padding-left: 50px; }
.d3 { padding-left: 75px; }
.d4 { padding-left: 100px; }
.d5 { padding-left: 125px; }
.d6 { padding-left: 150px; }
.scrollbar {
  width: 21px;
  flex: none;
  border: solid #fff;
  border-width: 0 1px;
  background: #f0f0f0;
}
.scrollbar button { display: grid; place-items: center; width: 100%; height: 21px; }
.scrollbar svg { width: 12px; height: 8px; }
.thumb { height: 294px; background: #cdcdcd; }

/* Editor */
.editor {
  display: flex;
  flex-direction: column;
  flex: 1;
  min-width: 0;
  margin-left: 7px;
  padding-top: 6px;
}
.tabs {
  display: flex;
  flex: none;
  overflow: hidden;
  padding-left: 2px;
  border-bottom: 1px solid #a0a0a0;
}
.tab {
  display: flex;
  align-items: center;
  flex: none;
  gap: 6px;
  height: 25px;
  padding: 0 17px 0 12px;
  border: solid #d9d9d9;
  border-width: 1px 0 0 1px;
}
.tab + .tab { padding-left: 15px; }
.tab:last-child { flex: 1 0 auto; padding-right: 0; }
.tab .icon-m { margin-right: -2px; }
.tab a { color: inherit; text-decoration: none; }
.tab button svg { width: 14px; height: 14px; }
.page {
  flex: 1;
  overflow: hidden;
  padding: 15px 0 0 13px;
  border-left: 1px solid #d9d9d9;
  background: #fff;
}
.item-head {
  display: flex;
  align-items: center;
  gap: 13px;
  padding-left: 1px;
  white-space: nowrap;
}
.item-head h1 {
  color: #0277bd;
  font: 28px/32px "Roboto Slab", "DejaVu Serif Condensed", serif;
}
.item-head h1 span { color: #78909c; }
.item-head p, .hint {
  color: #78909c;
  font: 13px/16px "Roboto Condensed", Roboto, sans-serif;
}
.form {
  display: grid;
  grid-template-columns: 121px 200px 1fr;
  column-gap: 12px;
  row-gap: 6px;
  margin: 18px 0 0 -2px;
  white-space: nowrap;
}
.name { text-align: right; }
.form input[type="text"] {
  width: 100%;
  height: 24px;
  padding: 0 3px;
  border: 1px solid #7a7a7a;
  background: #fff;
  color: inherit;
  font: inherit;
}
.hint { align-self: center; min-width: 0; overflow: hidden; }
.check {
  display: flex;
  align-items: center;
  gap: 6px;
  grid-column: 2;
  height: 20px;
}
.check input {
  appearance: none;
  display: grid;
  place-items: center;
  width: 16px;
  height: 16px;
  flex: none;
  margin: 0;
  border: 1px solid #333;
  background: #fff;
}
.check input:checked::before {
  content: "";
  width: 11px;
  height: 6px;
  margin-bottom: 3px;
  border: solid #333;
  border-width: 0 0 1px 1px;
  transform: rotate(-45deg);
}
.credits { margin-top: 40px; white-space: nowrap; }
```
